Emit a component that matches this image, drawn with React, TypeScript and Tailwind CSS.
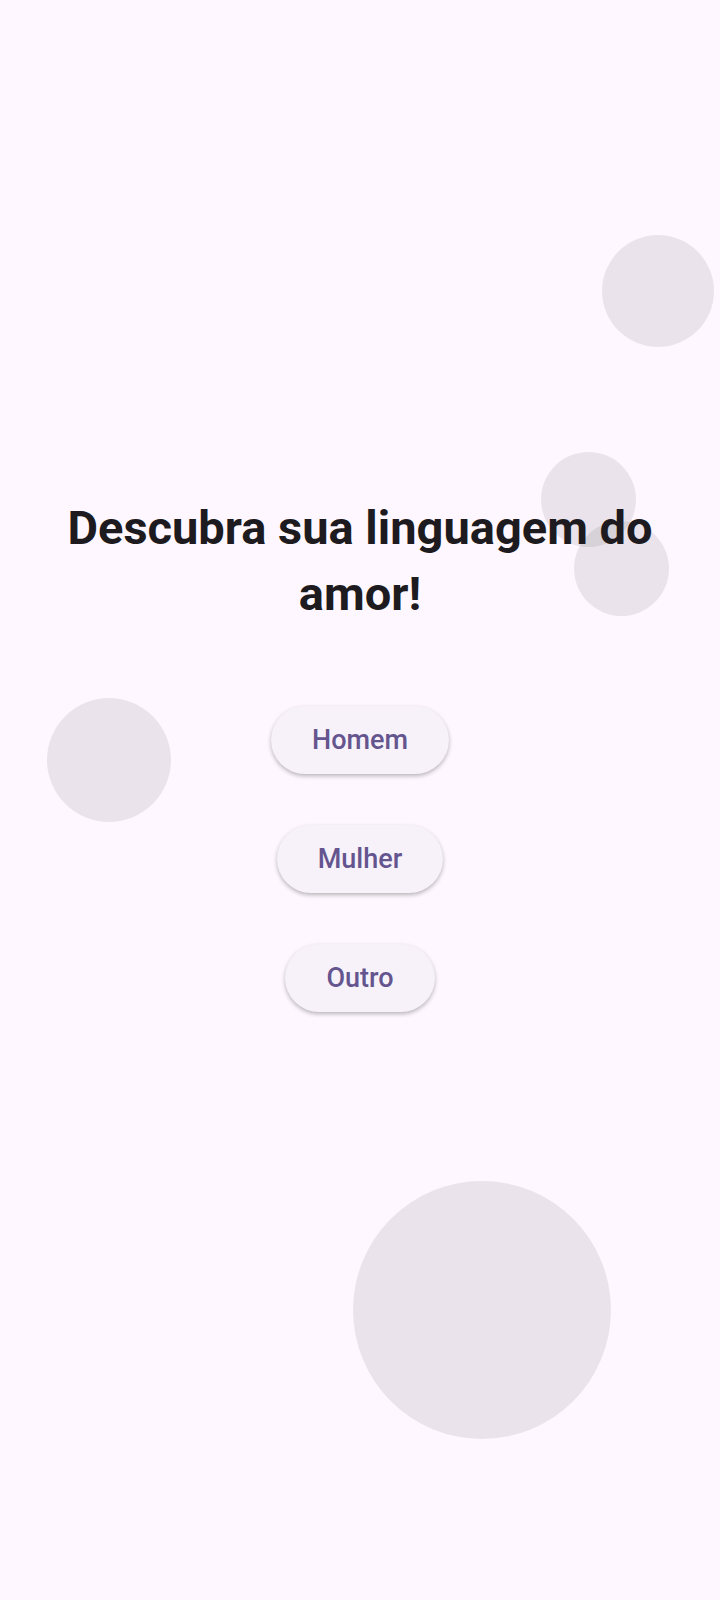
import React from "react";

const bubbles = [
  "left-[602px] top-[235px] w-[112px] h-[112px]",
  "left-[541px] top-[452px] w-[95px] h-[95px]",
  "left-[574px] top-[521px] w-[95px] h-[95px]",
  "left-[47px] top-[698px] w-[124px] h-[124px]",
  "left-[353px] top-[1181px] w-[258px] h-[258px]",
];

const options = ["Homem", "Mulher", "Outro"];

const App = () => {
  return (
    <div className="relative min-h-[1600px] w-full overflow-hidden bg-[#FEF7FF] font-['Roboto',sans-serif]">
      {bubbles.map((b) => (
        <div key={b} className={`absolute rounded-full bg-black/[0.08] ${b}`} />
      ))}
      <div className="relative flex flex-col items-center pt-[495px]">
        <h1 className="px-8 text-center text-[47px] leading-[66px] font-bold text-[#1D1B20]">
          Descubra sua linguagem do amor!
        </h1>
        <div className="mt-[79px] flex flex-col items-center gap-[51px]">
          {options.map((o) => (
            <button
              key={o}
              className="h-[68px] rounded-full bg-[#F7F2FA] px-[41px] text-[27px] font-medium text-[#65558F] shadow-[0_2px_4px_rgba(0,0,0,0.28)]"
            >
              {o}
            </button>
          ))}
        </div>
      </div>
    </div>
  );
};

export default App;
